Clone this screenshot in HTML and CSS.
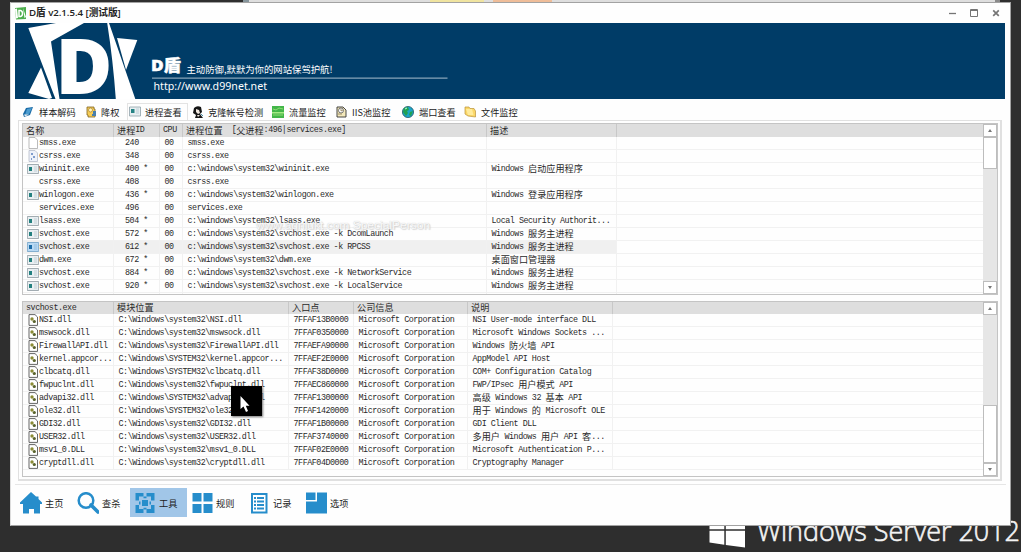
FILE: index.html
```html
<!DOCTYPE html>
<html lang="zh-CN">
<head>
<meta charset="utf-8">
<title>D盾 v2.1.5.4 [测试版]</title>
<link rel="stylesheet" href="styles.css">
</head>
<body>
<div class="desktop">
  <div class="behind"><i class="b-edge"></i><i class="b-yellow"></i><i class="b-orange"></i><i class="b-end"></i></div>
  <svg class="brand" width="321" height="34" viewBox="700 518 321 34">
    <path fill="#fff" d="M709.500 518H724.300V529.300H709.500ZM725.800 518H745V529.300H725.800ZM709.500 530.700H724.300V544.700L709.500 542.500ZM725.800 530.700H745V547.500L725.800 545Z"/>
    <text x="757" y="540.500" textLength="263" lengthAdjust="spacingAndGlyphs">Windows Server 2012</text>
  </svg>

  <div class="window">
    <header class="titlebar">
      <svg class="app-icon" width="13" height="13" viewBox="0 0 13 13"><path fill="#4cae4c" d="M1 1L12 0V12L2 12.500Z"/><path fill="#fff" d="M1 2L3 1.500L4 11L2 11.500ZM9 1L12 10L10.500 11Z"/><path fill="none" stroke="#fff" stroke-width="1.500" d="M5 3.500H6.500Q8.500 4 8.500 6.500T6.500 9.500H5Z"/></svg>
      <span class="title">D盾 v2.1.5.4 [测试版]</span>
      <svg class="controls" width="60" height="12" viewBox="0 0 60 12" fill="none" stroke="#757575"><path d="M3 6.500H10" stroke-width="1.300"/><path d="M24.500 2.500H31.500V9.500H24.500ZM24.500 3.500H31.500"/><path d="M47.200 3.300L52.800 8.900M52.800 3.300L47.200 8.900" stroke-width="1.700"/></svg>
    </header>

    <svg class="banner" width="990" height="76" viewBox="15 23 990 76">
      <rect x="15" y="23" width="990" height="76" fill="#003c67"/>
      <g fill="#fff">
        <path d="M28.300 28L56 23H84L51 41.500L59.500 99H55.500ZM41 67.500L52 98L49 99L28.300 93Z"/>
        <path d="M107.200 23H109L135.300 99H115.800Q113 60 107.200 23Z"/>
        <path d="M117 38L137.300 40L126 70Z"/>
        <text class="logo-d" x="55.500" y="93.500" textLength="57" lengthAdjust="spacingAndGlyphs">D</text>
        <text class="name" x="151" y="71" textLength="30" lengthAdjust="spacingAndGlyphs">D盾</text>
        <text class="slogan" x="186.500" y="72.500" textLength="146" lengthAdjust="spacingAndGlyphs">主动防御,默默为你的网站保驾护航!</text>
        <rect x="152" y="77.600" width="295.500" height="1" fill="#a9bfce"/>
        <text class="url" x="153.500" y="90" textLength="113.500" lengthAdjust="spacingAndGlyphs">http://www.d99net.net</text>
      </g>
    </svg>

    <nav class="tabs">
      <a class="tab t1"><svg viewBox="0 0 12 12"><path d="M4 2L11 1L8 9L2 11L1 8Z" fill="#1769a5"/><path d="M5 3L10 2L7 8L3 9Z" fill="#4c9ccf"/><path d="M2 8.500L7 8.500L3 10.500Z" fill="#eee"/></svg><span>样本解码</span></a>
      <a class="tab t2"><svg viewBox="0 0 12 12"><path d="M2 1H9V3H10V11H3V9H2Z" fill="#f6cc55" stroke="#806424" stroke-width=".8"/><circle cx="5.500" cy="4" r="2" fill="#fff6bd" stroke="#987029" stroke-width=".6"/><path d="M8 5H11V10H7V8H8Z" fill="#477fae"/></svg><span>降权</span></a>
      <a class="tab t3 active"><svg viewBox="0 0 12 12"><path d="M.5 1H11.500V10H.5Z" fill="#e8eff1" stroke="#8fa2aa" stroke-width=".8"/><path d="M2 3H5.500V7H2Z" fill="#268384"/><path d="M7 3H10M7 5H10M7 7H10" stroke="#b3c6d0" stroke-width=".8"/></svg><span>进程查看</span></a>
      <a class="tab t4"><svg viewBox="0 0 12 12"><path d="M2 2Q5 -1 9 1L10 6L8 8L11 12H3L4 9L1 7Z" fill="#151515"/><path d="M4 3L7 4L8 7L6 8L4 6ZM5 9L6 11L8 9Z" fill="#f0e7df"/><path d="M9 8L11 10" stroke="#438ca6"/></svg><span>克隆帐号检测</span></a>
      <a class="tab t5"><svg viewBox="0 0 12 12"><rect x="0" y="0" width="12" height="12" fill="#43b649"/><path d="M0 6H12V7.500H0Z" fill="#a6ea85"/><path d="M1 3L4 4L7 2L11 3M1 9H11" stroke="#8edc72" fill="none"/></svg><span>流量监控</span></a>
      <a class="tab t6"><svg viewBox="0 0 12 12"><path d="M2 1H8L11 4V11H2Z" fill="#f4e9bc" stroke="#333" stroke-width=".9"/><circle cx="6" cy="4.500" r="2.500" fill="#fff" stroke="#555" stroke-width=".8"/><path d="M6 3V5L8 4M3 8H7" stroke="#8a7951" stroke-width=".8" fill="none"/></svg><span>IIS池监控</span></a>
      <a class="tab t7"><svg viewBox="0 0 12 12"><circle cx="6" cy="6" r="5.600" fill="#1ba4c8" stroke="#174a59" stroke-width=".7"/><path d="M2 2L6 1L7 4L5 5L6 7L4 10L1 6ZM8 6L11 5L9 10L7 9Z" fill="#22a151"/><path d="M3 3L5 2" stroke="#b6ffd5"/></svg><span>端口查看</span></a>
      <a class="tab t8"><svg viewBox="0 0 12 12"><path d="M1 1H5L6 2.500H10L11.500 5V11L4 10L1 8Z" fill="#fbd767" stroke="#ba933a" stroke-width=".7"/><path d="M2 3H8L9.500 9L4 9Z" fill="#ffeb9b"/></svg><span>文件监控</span></a>
    </nav>

    <main class="panel">
      <section class="list processes">
        <div class="view" id="processes"></div>
        <div class="scroll"><i class="arrow up"></i><div class="track"><i class="thumb"></i></div><i class="arrow down"></i></div>
      </section>
      <section class="list modules">
        <div class="view" id="modules"></div>
        <div class="scroll"><i class="arrow up"></i><div class="track end"><i class="thumb"></i></div><i class="arrow down"></i></div>
      </section>
    </main>

    <footer class="toolbar">
      <a class="tool"><svg viewBox="0 0 22 22"><path d="M11 0L16 4.500L18.500 4.500V7L22 10.500V12H20V21.500H14V17H9V21.500H3V12H0V10.500Z"/></svg><span>主页</span></a>
      <a class="tool"><svg viewBox="0 0 22 22"><circle cx="9" cy="8.500" r="7.300" fill="none" stroke="#268dcb" stroke-width="2.500"/><path d="M14 13L21 20" stroke="#268dcb" stroke-width="3.600" stroke-linecap="round"/></svg><span>查杀</span></a>
      <a class="tool selected"><svg viewBox="0 0 22 22"><path d="M1.500 1H9.500V4.500H5V8.500H1.500ZM12.500 1H20.500V8.500H17V4.500H12.500ZM1.500 13H5V17H9.500V21H1.500ZM17 13H20.500V21H12.500V17H17ZM8 8H14V14H8Z"/><path d="M9.500 4.500H12.500V6.300H9.500ZM9.500 15.700H12.500V17.500H9.500ZM5 9.500H6.500V12.500H5ZM15.500 9.500H17V12.500H15.500Z"/></svg><span>工具</span></a>
      <a class="tool"><svg viewBox="0 0 22 22"><path d="M1.500 1H10.500V9.500H1.500ZM12.500 1H21.500V9.500H12.500ZM1.500 12H10.500V21H1.500ZM12.500 12H21.500V21H12.500Z"/></svg><span>规则</span></a>
      <a class="tool"><svg viewBox="0 0 22 22"><path d="M4 2H18.500V20.500H4Z" fill="#fff" stroke="#268dcb" stroke-width="2"/><path d="M6 5H8V7H6ZM9 5H16V7H9ZM6 8.500H8V10.500H6ZM9 8.500H16V10.500H9ZM6 12H8V14H6ZM9 12H16V14H9ZM6 15.500H8V17.500H6ZM9 15.500H16V17.500H9Z"/></svg><span>记录</span></a>
      <a class="tool"><svg viewBox="0 0 22 22"><path d="M1 .5H10.500V8H1ZM12 .5H22V21.500H1V9.500H12Z"/></svg><span>选项</span></a>
    </footer>
  </div>

  <svg class="watermark" width="180" height="14" viewBox="0 0 180 14"><text x="0" y="11" textLength="174" lengthAdjust="spacingAndGlyphs">www.aqniukt.com SpecialPerson</text></svg>
  <svg class="cursor" width="31" height="30" viewBox="0 0 31 30"><rect width="31" height="30" fill="#000"/><path d="M9.500 10V23L12.500 20.500L15 26L17 25L14.800 19.700H18.500Z" fill="#fff"/></svg>
</div>
<script src="app.js"></script>
</body>
</html>
```
FILE: styles.css
```css
* { box-sizing: border-box; }
body { margin: 0; font-family: "Noto Sans CJK SC", "Open Sans", sans-serif; color: #222; }
.desktop { position: relative; width: 1021px; height: 552px; background: #2e2e2e; overflow: hidden; padding: 2px 0 0 10px; }
.behind { position: absolute; left: 243px; top: 0; width: 757px; height: 2px; background: #dedede; display: flex; }
.behind i { height: 2px; }
.b-edge { width: 6px; background: #85949b; margin-right: 181px; }
.b-yellow { width: 54px; background: #f0e4a0; margin-right: 9px; }
.b-orange { width: 59px; background: #efbd99; }
.b-end { width: 5px; background: #8a8a8a; margin-left: auto; }
.brand { position: absolute; left: 700px; top: 518px; overflow: visible; }
.brand text { font: 300 28px "Open Sans", sans-serif; fill: #f4f4f4; stroke: #f4f4f4; stroke-width: .6px; }

.window { position: relative; width: 1001px; height: 524px; background: #fefefe; border: 1px solid #a2a2a2; border-left-color: #ddd; display: flex; flex-direction: column; padding: 0 4px; }
.titlebar { height: 20px; flex: none; display: flex; align-items: center; }
.app-icon { margin: 0 2px 0 -1px; }
.title { font: 600 9.700px/20px "Open Sans", "Noto Sans CJK SC", sans-serif; color: #222; white-space: nowrap; letter-spacing: -.05px; }
.controls { margin-left: auto; margin-right: 0; }
.banner { display: block; flex: none; }
.logo-d { font: 800 76px "Open Sans", sans-serif; }
.name { font: 900 16px "Open Sans", "Noto Sans CJK SC", sans-serif; stroke: #fff; stroke-width: .4px; }
.slogan { font: 400 9.500px "Noto Sans CJK SC", sans-serif; }
.url { font: 10.500px "Noto Sans", sans-serif; }

.tabs { height: 21px; flex: none; display: flex; align-items: flex-end; padding-left: 7px; }
.tab { height: 17px; display: flex; align-items: center; font-size: 9.200px; line-height: 16px; white-space: nowrap; flex: none; }
.tab svg { width: 12px; height: 12px; flex: none; margin-right: 4px; }
.t1 { width: 63px; } .t1 svg { margin-right: 5px; } .t2 { width: 42px; }
.t3 { width: 61px; padding-left: 1px; border: 1px solid #e3e3e3; border-bottom: 0; }
.t4 { width: 80px; padding-left: 4px; }
.t5 { width: 63px; padding-left: 4px; } .t5 svg { margin-right: 5px; }
.t6 { width: 67px; padding-left: 4px; } .t6 svg { margin-right: 5px; }
.t7 { width: 62px; padding-left: 4px; } .t7 svg { margin-right: 5px; }
.t8 { padding-left: 4px; } .t8 svg { margin-right: 5px; }

.panel { margin-left: 3px; width: 984px; height: 361px; flex: none; border: 1px solid #e0e0e0; border-right-width: 2px; border-bottom-width: 2px; padding: 2px 2px 0 3px; display: flex; flex-direction: column; gap: 6px; }
.list { border: 1px solid #c4c4c4; display: flex; overflow: hidden; flex: none; }
.processes { height: 172px; }
.modules { height: 176px; }
.view { flex: 1; overflow: hidden; }
.head, .row { display: grid; font: 8.400px/13px "Liberation Mono", monospace; letter-spacing: -.46px; white-space: pre; color: #2a2a2a; }
.head { background: #dedede; height: 13px; }
.modules .head { height: 12px; }
.row { height: 13px; }
.processes .head, .processes .row { grid-template-columns: 91px 46px 23px 304px 130px 1fr; }
.modules .head, .modules .row { grid-template-columns: 91px 175px 65px 114px 145px 1fr; }
.head > span, .row > span { height: 100%; border-right: 1px solid #f1f1f1; overflow: hidden; padding-left: 4px; display: flex; align-items: center; }
.head > span { border-right-color: #c8c8c8; padding-left: 3px; }
.head > span:last-child, .row > span:last-child { border-right: 0; }
.row > span { border-bottom: 1px solid #f1f1f1; }
.processes .row > span:nth-child(2) { padding-left: 11px; }
.processes .row > span:nth-child(n+3), .modules .row > span:nth-child(n+2) { padding-left: 4.500px; }
.zh { font: 9.150px/12px "Noto Sans CJK SC", sans-serif; letter-spacing: 0; margin-top: -2px; }
.row.hot > span:not(:last-child) { background: #f0f0f0; }
.ico { width: 12px; height: 12px; flex: none; margin: 0; }

.scroll { width: 14px; flex: none; display: flex; flex-direction: column; }
.arrow { height: 13px; flex: none; border: 1px solid #bdbdbd; background: #fff; display: flex; align-items: center; justify-content: center; }
.arrow::before { content: ""; border: 2.500px solid transparent; }
.up::before { border-bottom: 3px solid #777; border-top: 0; }
.down::before { border-top: 3px solid #777; border-bottom: 0; }
.track { flex: 1; background: #e6e6e6; display: flex; flex-direction: column; }
.track.end { justify-content: flex-end; }
.thumb { height: 32px; background: #fff; border: 1px solid #bdbdbd; }
.end .thumb { height: 58px; }

.toolbar { margin-top: 3px; border-top: 1px solid #e6e6e6; padding: 3px 0 0 1px; display: flex; }
.tool { width: 57px; height: 29px; padding-left: 4px; display: flex; align-items: center; gap: 3px; font-size: 9.200px; white-space: nowrap; }
.tool svg { width: 22px; height: 22px; fill: #268dcb; flex: none; }
.selected { background: #a1c6e8; }

.watermark { position: absolute; left: 256px; top: 218px; overflow: visible; }
.watermark text { font: 11px "Liberation Sans", sans-serif; fill: rgba(255,255,255,.9); text-shadow: 0 0 1px #bbb, 1px 1px 1px #d0d0d0; }
.cursor { position: absolute; left: 231px; top: 386px; box-shadow: 1px 1px 2px #777; }
```
FILE: app.js
```js
const icons = {
  page: '<path d="M2 .5H8L10.500 3V11.500H2Z" fill="#fff" stroke="#aaa" stroke-width=".8"/>',
  sys: '<path d="M2 .5H8L10.500 3V11.500H2Z" fill="#eef2fa" stroke="#b6bdca" stroke-width=".8"/><path d="M4 3H6V5H4ZM6 6H8V8H6ZM4 8H5V10H4Z" fill="#7f9ccc"/>',
  app: '<path d="M.4 1.500H11.600V10.500H.4Z" fill="#e9eff2" stroke="#8d999f" stroke-width=".8"/><path d="M2 4H5V8H2Z" fill="#23807f"/><path d="M7 4H10M7 6H10M7 8H10" stroke="#b5c4cc" stroke-width=".7"/>',
  hot: '<path d="M.4 1.500H11.600V10.500H.4Z" fill="#b9d9f3" stroke="#6f9fc6" stroke-width=".8"/><path d="M2 4H5V8H2Z" fill="#1c6ca8"/><path d="M7 4H10M7 6H10M7 8H10" stroke="#85b3d8" stroke-width=".7"/>',
  dll: '<path d="M2 .6H8L10.500 3V11.400H2Z" fill="#fff" stroke="#555" stroke-width=".9"/><circle cx="5" cy="5" r="1.700" fill="#8b8c35"/><circle cx="7.300" cy="7.500" r="1.600" fill="#59622b"/>',
  none: ''
};

const processHead = ['名称', '进程ID', 'CPU', '进程位置  [父进程:496|services.exe]', '描述', ''];
const sys = 'c:\\windows\\system32\\';
const processes = [
  ['page', 'smss.exe', '240', 'smss.exe', ''],
  ['sys', 'csrss.exe', '348', 'csrss.exe', ''],
  ['app', 'wininit.exe', '400 *', sys + 'wininit.exe', 'Windows 启动应用程序'],
  ['none', 'csrss.exe', '408', 'csrss.exe', ''],
  ['app', 'winlogon.exe', '436 *', sys + 'winlogon.exe', 'Windows 登录应用程序'],
  ['none', 'services.exe', '496', 'services.exe', ''],
  ['app', 'lsass.exe', '504 *', sys + 'lsass.exe', 'Local Security Authorit...'],
  ['app', 'svchost.exe', '572 *', sys + 'svchost.exe -k DcomLaunch', 'Windows 服务主进程'],
  ['hot', 'svchost.exe', '612 *', sys + 'svchost.exe -k RPCSS', 'Windows 服务主进程'],
  ['app', 'dwm.exe', '672 *', sys + 'dwm.exe', '桌面窗口管理器'],
  ['app', 'svchost.exe', '884 *', sys + 'svchost.exe -k NetworkService', 'Windows 服务主进程'],
  ['app', 'svchost.exe', '920 *', sys + 'svchost.exe -k LocalService', 'Windows 服务主进程'],
  ['app', '', '', '', '']
];

const moduleHead = ['svchost.exe', '模块位置', '入口点', '公司信息', '说明', ''];
const modules = [
  ['NSI.dll', 'system32', '7FFAF13B0000', 'NSI User-mode interface DLL'],
  ['mswsock.dll', 'system32', '7FFAF0350000', 'Microsoft Windows Sockets ...'],
  ['FirewallAPI.dll', 'system32', '7FFAEFA90000', 'Windows 防火墙 API'],
  ['kernel.appcor...', 'SYSTEM32', '7FFAEF2E0000', 'AppModel API Host'],
  ['clbcatq.dll', 'SYSTEM32', '7FFAF38D0000', 'COM+ Configuration Catalog'],
  ['fwpuclnt.dll', 'system32', '7FFAEC860000', 'FWP/IPsec 用户模式 API'],
  ['advapi32.dll', 'SYSTEM32', '7FFAF1300000', '高级 Windows 32 基本 API'],
  ['ole32.dll', 'SYSTEM32', '7FFAF1420000', '用于 Windows 的 Microsoft OLE'],
  ['GDI32.dll', 'system32', '7FFAF1B00000', 'GDI Client DLL'],
  ['USER32.dll', 'system32', '7FFAF3740000', '多用户 Windows 用户 API 客...'],
  ['msv1_0.DLL', 'system32', '7FFAF02E0000', 'Microsoft Authentication P...'],
  ['cryptdll.dll', 'system32', '7FFAF04D0000', 'Cryptography Manager']
];

const mark = t => t.replace(/[\u4e00-\u9fff]+/g, m => `<span class="zh">${m}</span>`);
const icon = k => `<svg class="ico" viewBox="0 0 12 12">${icons[k]}</svg>`;
const line = (cls, cells) => `<div class="${cls}">${cells.map(c => `<span>${c}</span>`).join('')}</div>`;

document.getElementById('processes').innerHTML = line('head', processHead.map(mark)) +
  processes.map(([k, name, pid, path, desc]) =>
    line(k === 'hot' ? 'row hot' : 'row', [icon(k) + name, pid, name ? '00' : '', path, mark(desc), ''])).join('');

document.getElementById('modules').innerHTML = line('head', moduleHead.map(mark)) +
  modules.map(([name, dir, entry, desc]) =>
    line('row', [icon('dll') + name, `C:\\Windows\\${dir}\\${name}`, entry, 'Microsoft Corporation', mark(desc), ''])).join('');
```
